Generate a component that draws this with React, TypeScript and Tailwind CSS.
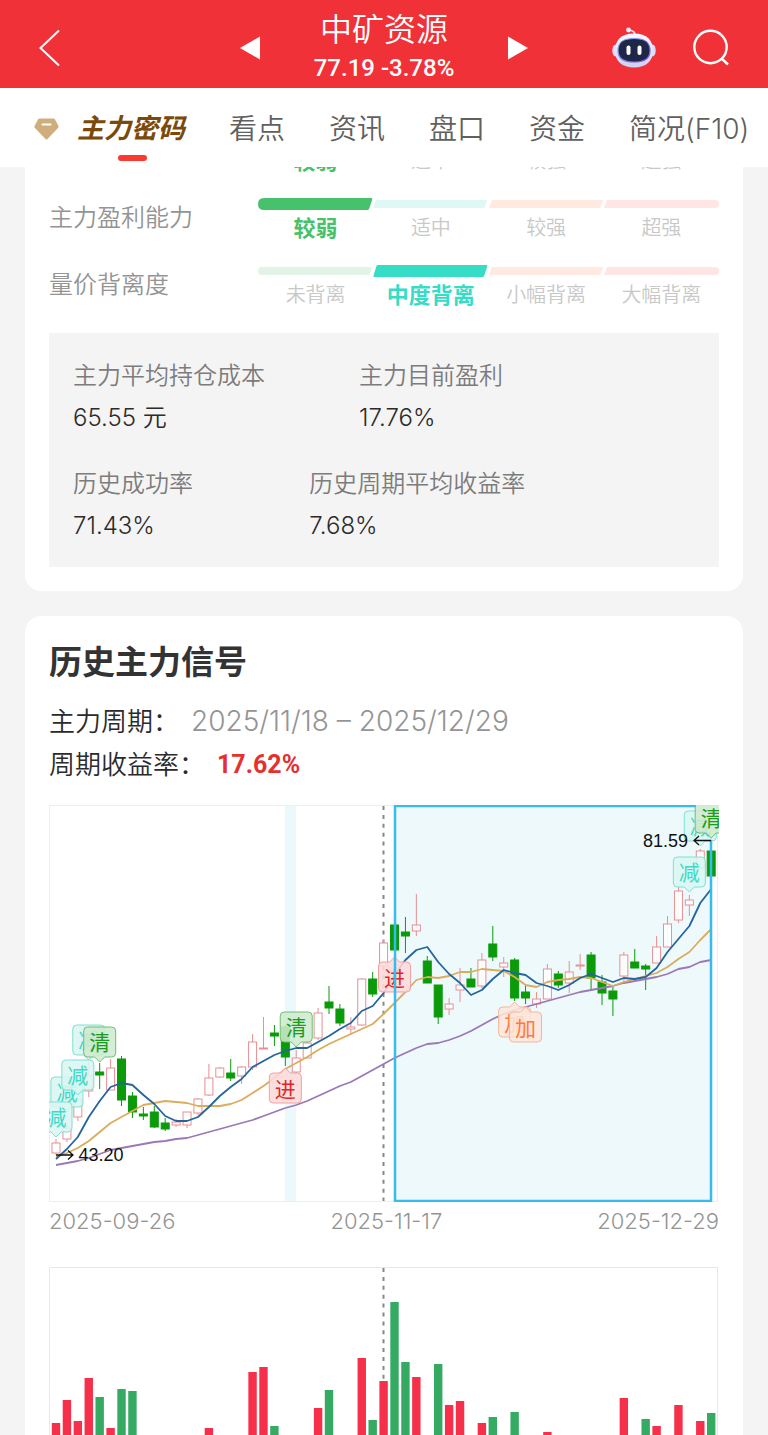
import React from 'react';

type Tone = 'green' | 'teal' | 'orange' | 'red';

const FAINT: Record<Tone, string> = {
    green: 'fill-[#e2f4e8]',
    teal: 'fill-[#def8f5]',
    orange: 'fill-[#ffe9e1]',
    red: 'fill-[#ffe6e4]',
};

const TONES: Tone[] = ['green', 'teal', 'orange', 'red'];

const LEVELS = [
    { name: '主力控盘能力', active: 0, options: ['较弱', '适中', '较强', '超强'] },
    { name: '主力盈利能力', active: 0, options: ['较弱', '适中', '较强', '超强'] },
    { name: '量价背离度', active: 1, options: ['未背离', '中度背离', '小幅背离', '大幅背离'] },
];

const TABS = ['看点', '资讯', '盘口', '资金', '简况(F10)'];

// [up, body top, body bottom, high, low]
const CANDLES: [number, number, number, number, number][] = [
    [1, 1143, 1153, 1139, 1155], [1, 1128, 1139, 1125, 1142], [1, 1100, 1117, 1096, 1121], [1, 1076, 1091, 1062, 1097],
    [0, 1072, 1075, 1063, 1089], [1, 1068, 1090, 1059, 1090], [0, 1059, 1100, 1056, 1106], [0, 1096, 1112, 1092, 1118],
    [0, 1114, 1116, 1107, 1120], [0, 1112, 1127, 1106, 1128], [0, 1123, 1129, 1118, 1131], [1, 1122, 1125, 1119, 1127],
    [1, 1112, 1125, 1112, 1128], [1, 1099, 1113, 1098, 1115], [1, 1078, 1095, 1064, 1096], [1, 1068, 1077, 1067, 1078],
    [0, 1073, 1078, 1059, 1081], [1, 1067, 1076, 1066, 1084], [1, 1042, 1067, 1034, 1070], [1, 1048, 1049, 1017, 1049],
    [0, 1033, 1036, 1025, 1046], [0, 1027, 1057, 1025, 1066], [1, 1058, 1072, 1050, 1074], [1, 1043, 1058, 1041, 1058],
    [1, 1013, 1038, 1008, 1040], [0, 1002, 1008, 986, 1014], [0, 1009, 1023, 1004, 1026], [1, 1027, 1029, 1017, 1035],
    [1, 979, 1025, 978, 1026], [0, 979, 994, 972, 997], [1, 943, 966, 940, 968], [0, 925, 950, 925, 956],
    [0, 932, 936, 917, 953], [1, 925, 931, 894, 936], [0, 961, 983, 956, 983], [0, 985, 1017, 985, 1024],
    [1, 1004, 1009, 998, 1015], [1, 985, 990, 968, 1002], [0, 979, 987, 968, 987], [1, 960, 986, 953, 988],
    [0, 944, 957, 926, 961], [1, 963, 967, 957, 977], [0, 960, 998, 958, 1001], [0, 992, 998, 985, 1004],
    [1, 999, 1004, 992, 1008], [1, 969, 999, 964, 999], [0, 974, 985, 971, 988], [1, 972, 983, 961, 993],
    [1, 965, 966, 954, 970], [0, 955, 978, 952, 990], [0, 982, 993, 975, 1005], [0, 991, 999, 987, 1016],
    [1, 955, 976, 952, 984], [0, 962, 968, 949, 968], [0, 966, 969, 964, 990], [1, 947, 963, 936, 963],
    [1, 924, 947, 916, 947], [1, 891, 920, 887, 923], [1, 900, 905, 895, 916], [1, 851, 868, 849, 868],
    [0, 851, 876, 838, 876],
];

const MA_FAST = [
    1159, 1149, 1137, 1117, 1101, 1087, 1083, 1085, 1095, 1104, 1116, 1121, 1121, 1117, 1107, 1096, 1087, 1079, 1067, 1061,
    1055, 1051, 1048, 1048, 1042, 1036, 1029, 1023, 1011, 1006, 993, 975, 960, 950, 947, 962, 974, 983, 995, 990,
    979, 970, 973, 975, 983, 986, 990, 985, 978, 974, 978, 982, 978, 979, 977, 968, 952, 939, 926, 903, 889,
];

const MA_MID = [
    1157, 1153, 1148, 1141, 1132, 1123, 1117, 1111, 1105, 1103, 1101, 1102, 1103, 1106, 1106, 1106, 1104, 1100, 1093, 1086,
    1078, 1069, 1063, 1057, 1050, 1044, 1039, 1034, 1029, 1024, 1014, 1003, 992, 980, 977, 978, 976, 972, 972, 969,
    970, 971, 977, 985, 987, 982, 980, 979, 977, 978, 982, 986, 982, 979, 976, 973, 967, 959, 952, 940, 929,
];

const MA_SLOW = [
    1165, 1163, 1161, 1158, 1154, 1150, 1148, 1146, 1144, 1142, 1141, 1139, 1138, 1135, 1132, 1129, 1126, 1123, 1120, 1116,
    1112, 1108, 1105, 1101, 1096, 1091, 1086, 1082, 1076, 1070, 1064, 1058, 1053, 1048, 1044, 1043, 1040, 1036, 1031, 1025,
    1019, 1014, 1010, 1007, 1004, 1001, 998, 995, 992, 990, 988, 986, 983, 981, 979, 977, 974, 969, 967, 962, 960,
];

// [index, up, top]
const VOLUMES: [number, number, number][] = [
    [0, 1, 1423], [1, 1, 1400], [2, 1, 1421], [3, 1, 1378], [4, 0, 1397], [5, 1, 1428], [6, 0, 1389], [7, 0, 1391],
    [14, 1, 1428], [18, 1, 1372], [19, 1, 1367], [20, 0, 1426], [24, 1, 1408], [25, 0, 1390], [28, 1, 1358], [29, 0, 1420],
    [30, 1, 1381], [31, 0, 1302], [32, 0, 1362], [33, 1, 1377], [35, 0, 1364], [36, 1, 1405], [37, 1, 1401], [39, 1, 1423],
    [40, 0, 1417], [42, 0, 1412], [45, 1, 1432], [52, 1, 1398], [54, 0, 1419], [55, 1, 1426], [57, 1, 1405], [59, 1, 1421],
    [60, 0, 1413],
];

const MARKS = {
    减: { fill: '#d9f6f2', stroke: '#7fe0d3', text: '#3fd9c5' },
    清: { fill: '#cfe9cf', stroke: '#6fbf6f', text: '#1c9c1c' },
    进: { fill: '#fddada', stroke: '#f3a0a0', text: '#e02626' },
    加: { fill: '#fde5da', stroke: '#f6b596', text: '#ff7a3c' },
};

// [label, index, tip y, points down]
const SIGNALS: [keyof typeof MARKS, number, number, boolean][] = [
    ['减', 3, 1060, true],
    ['清', 4, 1062, true],
    ['减', 1, 1112, true],
    ['减', 2, 1095, true],
    ['减', 0, 1137, true],
    ['清', 22, 1047, true],
    ['进', 21, 1068, false],
    ['进', 31, 957, false],
    ['加', 42, 1002, false],
    ['加', 43, 1007, false],
    ['减', 59, 846, true],
    ['减', 58, 892, true],
    ['清', 60, 838, true],
];

const xAt = (i: number) => 56 + i * 10.92;

const line = (ys: number[]) => ys.map((y, i) => `${xAt(i).toFixed(1)},${y}`).join(' ');

const LevelBar: React.FC<{ index: number; active: boolean }> = ({ index, active }) => {
    const full = index === 0
        ? 'M6 0 H114 Q115.500 0 115 1.500 L112 10.500 Q111.500 12 110 12 H6 Q0 12 0 6 Q0 0 6 0Z'
        : 'M5 0 H114 Q115.500 0 115 1.500 L112 10.500 Q111.500 12 110 12 H2 Q0 12 0.500 10.500 L3.500 1 Q4 0 5 0Z';
    const slim = [
        'M4 2 H115 L112 10 H4 Q0 10 0 6 Q0 2 4 2Z',
        'M3 2 H115 L112 10 H0Z',
        'M3 2 H115 L112 10 H0Z',
        'M3 2 H112 Q116 2 116 6 Q116 10 112 10 H0Z',
    ];
    const color = active ? (index === 0 ? 'fill-[#48c16c]' : 'fill-[#35dcc6]') : FAINT[TONES[index]];
    return (
        <svg viewBox="0 0 116 12" preserveAspectRatio="none" className="block h-3 w-full" aria-hidden="true">
            <path d={active ? full : slim[index]} className={color} />
        </svg>
    );
};

const LevelRow: React.FC<(typeof LEVELS)[number]> = ({ name, active, options }) => (
    <div className="flex h-[67px] items-center">
        <div className="w-[209px] shrink-0 text-2xl font-[350] text-[#949494]">{name}</div>
        <div className="grid flex-1 grid-cols-4 pt-0.5">
            {options.map((option, i) => (
                <div key={option} className="flex flex-col gap-1.5">
                    <LevelBar index={i} active={i === active} />
                    {i === active ? (
                        <span className={`text-center text-[22px] leading-6 font-bold ${i === 0 ? 'text-[#48c16c]' : 'text-[#35dcc6]'}`}>{option}</span>
                    ) : (
                        <span className="text-center text-xl leading-6 font-[350] text-[#c8c8c8]">{option}</span>
                    )}
                </div>
            ))}
        </div>
    </div>
);

const Stat: React.FC<{ label: string; value: string; className?: string }> = ({ label, value, className }) => (
    <div className={className}>
        <dt className="text-2xl leading-9 font-[350] text-[#7c7c7c]">{label}</dt>
        <dd className="text-2xl leading-[48px] font-[350] text-[#2b2b2b]">{value}</dd>
    </div>
);

const Signal: React.FC<{ label: keyof typeof MARKS; x: number; tip: number; down: boolean }> = ({ label, x, tip, down }) => {
    const c = MARKS[label];
    const d = down
        ? `M${x} ${tip} l-5 -5 h-7 q-4 0 -4 -4 v-22 q0 -4 4 -4 h24 q4 0 4 4 v22 q0 4 -4 4 h-7 Z`
        : `M${x} ${tip} l5 5 h7 q4 0 4 4 v22 q0 4 -4 4 h-24 q-4 0 -4 -4 v-22 q0 -4 4 -4 h7 Z`;
    return (
        <g>
            <path d={d} fill={c.fill} fillOpacity="0.88" stroke={c.stroke} strokeWidth="1" />
            <text x={x} y={down ? tip - 12 : tip + 29} textAnchor="middle" fontSize="21" fill={c.text}>{label}</text>
        </g>
    );
};

const PriceChart: React.FC = () => (
    <svg viewBox="49 805 670 397" className="block w-full" role="img" aria-label="历史主力信号">
        <rect x="49.500" y="805.500" width="668" height="396" fill="#fff" stroke="#eeeeee" />
        <rect x="285" y="806" width="11" height="395" fill="#ebf9fc" />
        <rect x="394.500" y="806" width="316" height="395" fill="#eef9fc" />
        <line x1="383.500" x2="383.500" y1="806" y2="1201" stroke="#888" strokeWidth="2" strokeDasharray="4 4.900" />
        {CANDLES.map(([up, top, bottom, high, low], i) => (
            <g key={i} stroke={up ? '#e88f94' : '#0a9a0a'} fill={up ? '#fff' : '#0a9a0a'}>
                <line x1={xAt(i)} x2={xAt(i)} y1={high} y2={low} />
                <rect x={xAt(i) - 4} y={top} width="8" height={bottom - top} fillOpacity={up && i > 30 ? 0.9 : 1} />
            </g>
        ))}
        <g fill="none" strokeWidth="1.800" strokeLinejoin="round">
            <polyline points={line(MA_SLOW)} stroke="#9b78b8" />
            <polyline points={line(MA_MID)} stroke="#dbac5c" />
            <polyline points={line(MA_FAST)} stroke="#25659c" />
        </g>
        {SIGNALS.map(([label, i, tip, down]) => (
            <Signal key={`${label}${i}`} label={label} x={xAt(i)} tip={tip} down={down} />
        ))}
        <path d="M711 840 V1201 H395 V806 H696" fill="none" stroke="#35bdf0" strokeWidth="2.500" />
        <g fill="none" stroke="#111" strokeWidth="1.300">
            <path d="M711 840.500 H694 M699 836 L694 840.500 L699 845" />
            <path d="M56 1155 H73 M68 1150.500 L73 1155 L68 1159.500" />
        </g>
        <g fontSize="18" fill="#111" className="font-['Liberation_Sans',sans-serif]">
            <text x="643" y="847">81.59</text>
            <text x="78.500" y="1161">43.20</text>
        </g>
    </svg>
);

const VolumeChart: React.FC = () => (
    <svg viewBox="49 1267 670 170" className="block w-full" role="img" aria-label="成交量">
        <path d="M49.500 1440 V1267.500 H717.500 V1440" fill="none" stroke="#e8e8e8" />
        <line x1="383.500" x2="383.500" y1="1268" y2="1380" stroke="#888" strokeWidth="2" strokeDasharray="4 4.900" />
        {VOLUMES.map(([i, up, top]) => (
            <rect key={i} x={xAt(i) - 4.2} y={top} width="8.400" height={1440 - top} fill={up ? '#f6304a' : '#34aa63'} />
        ))}
    </svg>
);

const Robot: React.FC = () => (
    <svg viewBox="0 0 44 42" className="h-[42px] w-11" aria-hidden="true">
        <defs>
            <linearGradient id="shell" x1="0" y1="0" x2="0" y2="1">
                <stop offset="0" stopColor="#f7f8ff" />
                <stop offset="1" stopColor="#cfd1f3" />
            </linearGradient>
            <linearGradient id="rim" x1="0" y1="0" x2="1" y2="1">
                <stop offset="0" stopColor="#8fb4f5" />
                <stop offset="1" stopColor="#7a3fe0" />
            </linearGradient>
        </defs>
        <path d="M23 8 C23 4.500 21 3.500 17 3" fill="none" stroke="#f3dff0" strokeWidth="1.600" />
        <circle cx="16.500" cy="3" r="2.400" fill="#f5eefa" />
        <ellipse cx="3.500" cy="23.500" rx="3.200" ry="6" fill="#dcddf7" />
        <ellipse cx="40.500" cy="23.500" rx="3.200" ry="6" fill="#dcddf7" />
        <path d="M22 6.500 C35 6.500 41 13 41 24 C41 34 34 40.500 22 40.500 C10 40.500 3 34 3 24 C3 13 9 6.500 22 6.500Z" fill="url(#shell)" />
        <path d="M22 11.500 C33 11.500 38 15 38 23.500 C38 31.500 33 35 22 35 C11 35 6 31.500 6 23.500 C6 15 11 11.500 22 11.500Z" fill="#1e2748" stroke="url(#rim)" strokeWidth="1.200" />
        <rect x="14.500" y="18.500" width="4" height="9.500" rx="2" fill="#fff" />
        <rect x="25.500" y="18.500" width="4" height="9.500" rx="2" fill="#fff" />
    </svg>
);

const Header: React.FC = () => (
    <header className="flex h-[88px] shrink-0 items-center justify-between bg-[#f03238] px-[38px] text-white">
        <div className="flex flex-1">
            <button aria-label="返回" className="pt-2">
                <svg viewBox="0 0 24 38" className="h-[38px] w-6" fill="none" stroke="currentColor" strokeWidth="2">
                    <path d="M21 1.500 L2.500 19 L21 36.500" />
                </svg>
            </button>
        </div>
        <div className="flex items-center gap-[54px]">
            <button aria-label="上一只" className="pt-2">
                <svg viewBox="0 0 20 24" className="h-6 w-5" fill="currentColor"><path d="M20 0.500 V23.500 L0 12Z" /></svg>
            </button>
            <div className="pt-2 text-center">
                <h1 className="text-[32px] leading-10 font-[350]">中矿资源</h1>
                <p className="font-['Roboto','Noto_Sans_CJK_SC',sans-serif] text-2xl leading-9 font-medium">77.19 -3.78%</p>
            </div>
            <button aria-label="下一只" className="pt-2">
                <svg viewBox="0 0 20 24" className="h-6 w-5" fill="currentColor"><path d="M0 0.500 V23.500 L20 12Z" /></svg>
            </button>
        </div>
        <div className="flex flex-1 items-center justify-end gap-9 pt-2">
            <button aria-label="智能助手"><Robot /></button>
            <button aria-label="搜索">
                <svg viewBox="0 0 38 38" className="h-[38px] w-[38px]" fill="none" stroke="currentColor" strokeWidth="2.400">
                    <circle cx="18.500" cy="18" r="16.200" />
                    <path d="M29 29 L36 35.500" />
                </svg>
            </button>
        </div>
    </header>
);

const TabBar: React.FC = () => (
    <nav className="flex h-[79px] shrink-0 items-center gap-11 overflow-hidden bg-white pt-0.5 pl-[34px] whitespace-nowrap">
        <a href="#code" className="relative flex items-center gap-[18px]">
            <svg viewBox="0 0 25 22" className="h-[22px] w-[25px]" aria-hidden="true">
                <path d="M5.500 0.500 H19.500 Q20.500 0.500 21 1.500 L24.500 8 Q25 9 24 10 L13.500 21 Q12.500 22 11.500 21 L1 10 Q0 9 0.500 8 L4 1.500 Q4.500 0.500 5.500 0.500Z" fill="#cfae7c" />
                <path d="M8.500 6.500 H16.500" stroke="#fff" strokeWidth="2" strokeLinecap="round" />
            </svg>
            <span className="text-[27px] leading-10 font-bold text-[#7a4a0c] italic">主力密码</span>
            <span className="absolute right-[38px] -bottom-3 h-1.5 w-[29px] rounded-full bg-[#fa3a30]" />
        </a>
        {TABS.map((tab) => (
            <a key={tab} href={`#${tab}`} className="text-[28px] leading-10 font-[350] text-[#606060]">{tab}</a>
        ))}
    </nav>
);

export default function App() {
    return (
        <div className="flex h-screen flex-col overflow-hidden bg-[#f4f4f4] font-['Inter','Noto_Sans_CJK_SC',sans-serif]">
            <Header />
            <TabBar />
            <main className="flex min-h-0 flex-1 flex-col gap-[25px] overflow-hidden px-[25px]">
                <section className="shrink-0 rounded-b-2xl bg-white px-6 pb-6">
                    <div className="-mt-[50px]">
                        {LEVELS.map((level) => (
                            <LevelRow key={level.name} {...level} />
                        ))}
                    </div>
                    <dl className="mt-[15px] flex flex-col gap-6 bg-[#f4f4f4] px-6 pt-[25px] pb-[17px]">
                        <div className="flex">
                            <Stat label="主力平均持仓成本" value="65.55 元" className="basis-[46%]" />
                            <Stat label="主力目前盈利" value="17.76%" />
                        </div>
                        <div className="flex">
                            <Stat label="历史成功率" value="71.43%" className="basis-[38%]" />
                            <Stat label="历史周期平均收益率" value="7.68%" />
                        </div>
                    </dl>
                </section>
                <section className="shrink-0 rounded-t-2xl bg-white px-6 pt-[26px]">
                    <h2 className="text-[33px] leading-10 font-bold text-[#333333]">历史主力信号</h2>
                    <div className="mt-[18px] text-[26px] leading-[43px] font-[350] text-[#2b2b2b]">
                        <p className="flex gap-3">
                            主力周期：<span className="text-[28px] text-[#949494]">2025/11/18 – 2025/12/29</span>
                        </p>
                        <p className="flex gap-3">
                            周期收益率：
                            <span className="font-['Roboto','Noto_Sans_CJK_SC',sans-serif] text-[25px] font-bold text-[#e6302f]">17.62%</span>
                        </p>
                    </div>
                    <div className="mt-[19px]">
                        <PriceChart />
                        <div className="flex justify-between text-[22px] leading-[38px] font-[350] text-[#949494]">
                            <span>2025-09-26</span>
                            <span>2025-11-17</span>
                            <span>2025-12-29</span>
                        </div>
                    </div>
                    <div className="mt-[27px]">
                        <VolumeChart />
                    </div>
                </section>
            </main>
        </div>
    );
}
